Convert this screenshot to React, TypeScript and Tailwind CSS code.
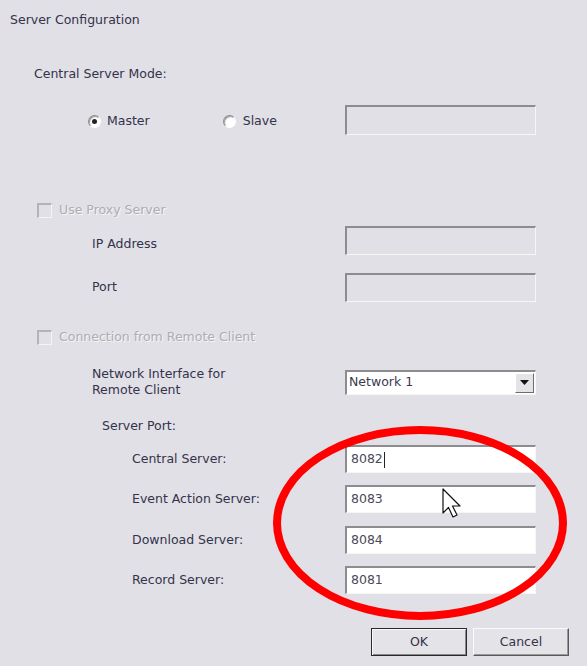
import React from 'react'

const font = { fontFamily: '"DejaVu Sans", Verdana, sans-serif' }

function Sunken({ value, disabled, caret }: { value?: string; disabled?: boolean; caret?: boolean }) {
  return (
    <div
      className={`flex h-full w-[191px] items-center border-t-2 border-l-2 border-b border-r border-t-[#8d8d8f] border-l-[#8d8d8f] border-b-[#f6f6f2] border-r-[#f6f6f2] pl-[4px] text-[12.5px] text-[#4a4a5a] ${
        disabled ? 'bg-[#e1e0e6]' : 'bg-white'
      }`}
    >
      {value}
      {caret && <span className="ml-[1px] inline-block h-[16px] w-px bg-[#222]" />}
    </div>
  )
}

function Check({ label }: { label: string }) {
  return (
    <div className="flex h-[16px] items-center pl-[37px]">
      <div className="h-[15px] w-[15px] border-t-2 border-l-2 border-b border-r border-t-[#b4b4b6] border-l-[#b4b4b6] border-b-[#f4f4f2] border-r-[#f4f4f2] bg-[#e1e0e6]" />
      <span className="ml-[7px] text-[12.5px] text-[#aeadb3] [text-shadow:1px_1px_0_#f6f6f6]">{label}</span>
    </div>
  )
}

function Radio({ checked }: { checked?: boolean }) {
  return (
    <div className="flex h-[13px] w-[13px] items-center justify-center rounded-full border border-t-[#8a8a8a] border-l-[#8a8a8a] border-b-white border-r-white bg-white shadow-[inset_1px_1px_1px_#9a9a9a]">
      {checked && <div className="h-[5px] w-[5px] rounded-full bg-[#222]" />}
    </div>
  )
}

function PortRow({ label, value, caret, mt }: { label: string; value: string; caret?: boolean; mt: string }) {
  return (
    <div className={`flex h-[28px] items-center ${mt}`}>
      <div className="w-[345px] pl-[132px] text-[12.5px] text-[#33334a]">{label}</div>
      <Sunken value={value} caret={caret} />
    </div>
  )
}

export default function App() {
  return (
    <div className="relative h-[666px] w-[587px] overflow-hidden bg-[#e1e0e6]" style={font}>
      <div className="flex flex-col text-[#33334a]">
        <div className="mt-[12px] h-[16px] pl-[10px] text-[12.5px] leading-[16px]">Server Configuration</div>

        <div className="mt-[38px] h-[16px] pl-[34px] text-[12.5px] leading-[16px]">Central Server Mode:</div>

        <div className="mt-[23px] flex h-[30px] items-center">
          <div className="flex w-[345px] items-center pt-[2px]">
            <div className="ml-[88px] flex items-center gap-[6px]">
              <Radio checked />
              <span className="text-[12.5px]">Master</span>
            </div>
            <div className="ml-[73px] flex items-center gap-[7px]">
              <Radio />
              <span className="text-[12.5px]">Slave</span>
            </div>
          </div>
          <Sunken disabled />
        </div>

        <div className="mt-[67px]">
          <Check label="Use Proxy Server" />
        </div>

        <div className="mt-[8px] flex h-[29px] items-center">
          <div className="w-[345px] pl-[92px] pt-[8px] text-[12.5px]">IP Address</div>
          <Sunken disabled />
        </div>

        <div className="mt-[18px] flex h-[29px] items-center">
          <div className="w-[345px] pl-[92px] text-[12.5px]">Port</div>
          <Sunken disabled />
        </div>

        <div className="mt-[27px]">
          <Check label="Connection from Remote Client" />
        </div>

        <div className="mt-[21px] flex h-[32px] items-center">
          <div className="w-[345px] pl-[92px] text-[12.5px] leading-[16px]">
            Network Interface for
            <br />
            Remote Client
          </div>
          <div className="flex h-[25px] w-[191px] items-center border-t-2 border-l-2 border-b border-r border-t-[#8d8d8f] border-l-[#8d8d8f] border-b-[#f6f6f2] border-r-[#f6f6f2] bg-white">
            <span className="flex-1 pl-[2px] text-[12.5px] text-[#3a3a4e]">Network 1</span>
            <div className="mr-[1px] flex h-[20px] w-[19px] items-center justify-center border border-t-white border-l-white border-b-[#6e6e6e] border-r-[#6e6e6e] bg-[#e4e3e8]">
              <svg width="9" height="5" viewBox="0 0 9 5">
                <path d="M0 0H9L4.5 5Z" fill="#111" />
              </svg>
            </div>
          </div>
        </div>

        <div className="mt-[20px] h-[16px] pl-[102px] text-[12.5px] leading-[16px]">Server Port:</div>

        <PortRow label="Central Server:" value="8082" caret mt="mt-[11px]" />
        <PortRow label="Event Action Server:" value="8083" mt="mt-[12px]" />
        <PortRow label="Download Server:" value="8084" mt="mt-[13px]" />
        <PortRow label="Record Server:" value="8081" mt="mt-[12px]" />

        <div className="mt-[34px] flex gap-[6px] pl-[371px]">
          <button className="flex h-[28px] w-[96px] items-center justify-center border border-[#2a2a2a] bg-[#e4e3e8] text-[12.5px] text-[#33334a] shadow-[inset_1px_1px_0_#fafafa,inset_-1px_-1px_0_#8a8a8a]">
            OK
          </button>
          <button className="flex h-[28px] w-[96px] items-center justify-center border border-t-[#fafafa] border-l-[#fafafa] border-b-[#5a5a5a] border-r-[#5a5a5a] bg-[#e4e3e8] text-[12.5px] text-[#33334a] shadow-[inset_-1px_-1px_0_#9a9a9a]">
            Cancel
          </button>
        </div>
      </div>

      <svg className="pointer-events-none absolute left-0 top-0" width="587" height="666">
        <ellipse cx="420" cy="523" rx="143" ry="93" fill="none" stroke="#ff0000" strokeWidth="8" />
        <path
          d="M443 489 L443 513 L448.5 507.5 L453 517 L457 515 L452.5 506 L460 506 Z"
          fill="#fff"
          stroke="#111"
          strokeWidth="1.2"
          strokeLinejoin="round"
        />
      </svg>
    </div>
  )
}
